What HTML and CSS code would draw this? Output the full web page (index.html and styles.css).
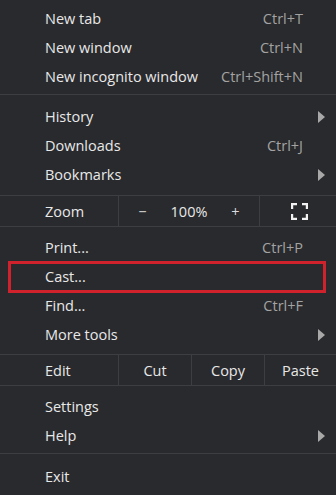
FILE: index.html
```html
<!DOCTYPE html>
<html lang="en">
<head>
    <meta charset="UTF-8">
    <meta name="viewport" content="width=device-width, initial-scale=1.0">
    <title>Menu</title>
    <link rel="stylesheet" href="styles.css">
</head>
<body>

    <div class="menu">
        <div class="item"><span class="label">New tab</span><span class="key">Ctrl+T</span></div>
        <div class="item"><span class="label">New window</span><span class="key">Ctrl+N</span></div>
        <div class="item"><span class="label">New incognito window</span><span class="key">Ctrl+Shift+N</span></div>

        <div class="sep"></div>

        <div class="item"><span class="label">History</span><span class="arrow"></span></div>
        <div class="item"><span class="label">Downloads</span><span class="key">Ctrl+J</span></div>
        <div class="item"><span class="label">Bookmarks</span><span class="arrow"></span></div>

        <!-- zoom controls -->
        <div class="split zoom-row">
            <div class="cell-label">Zoom</div>
            <div class="zoom-ctrl">
                <span class="minus">&minus;</span>
                <span>100%</span>
                <span class="plus">+</span>
            </div>
            <div class="full">
                <svg width="17" height="17" viewBox="0 0 17 17" fill="none" stroke="#f2f2f2" stroke-width="2.2">
                    <path d="M1.1 6V1.1H6M11 1.1h4.9V6M15.9 11v4.9H11M6 15.9H1.1V11"/>
                </svg>
            </div>
        </div>

        <div class="item"><span class="label">Print...</span><span class="key">Ctrl+P</span></div>
        <div class="item marked"><span class="label">Cast...</span></div>
        <div class="item"><span class="label">Find...</span><span class="key">Ctrl+F</span></div>
        <div class="item"><span class="label">More tools</span><span class="arrow"></span></div>

        <!-- edit controls -->
        <div class="split edit-row">
            <div class="cell-label">Edit</div>
            <div class="btn">Cut</div>
            <div class="btn">Copy</div>
            <div class="btn">Paste</div>
        </div>

        <div class="item"><span class="label">Settings</span></div>
        <div class="item"><span class="label">Help</span><span class="arrow"></span></div>

        <div class="sep last"></div>

        <div class="item"><span class="label">Exit</span></div>
    </div>

</body>
</html>
```

FILE: styles.css
```css
body {
    margin: 0;
    padding: 0;
    background-color: #292a2d;
    font-family: "Open Sans", "Noto Sans", Arial, sans-serif;
    font-size: 14.5px;
    color: #e8e8e8;
}
.menu {
    padding-top: 4px;
    width: 336px;
    height: 495px;
    overflow: hidden;
}
.item {
    position: relative;
    display: flex;
    align-items: center;
    height: 29px;
    padding-left: 45px;
    padding-right: 33px;
}
.label {
    flex: 1;
}
.key {
    color: #a3a3a3;
}
.arrow {
    position: absolute;
    right: 11px;
    top: 9px;
    width: 0;
    height: 0;
    border-top: 6px solid transparent;
    border-bottom: 6px solid transparent;
    border-left: 7px solid #a8a8a8;
}
.sep {
    height: 1px;
    background-color: #3d3e41;
    margin: 3px 0 7px;
}
.sep.last {
    margin-bottom: 8px;
}
.split {
    display: flex;
    height: 30px;
    border-top: 1px solid #3d3e41;
    border-bottom: 1px solid #3d3e41;
}
.zoom-row {
    margin-top: 6px;
    margin-bottom: 6px;
}
.edit-row {
    margin-top: 5px;
    margin-bottom: 6px;
}
.cell-label {
    width: 118px;
    padding-left: 45px;
    box-sizing: border-box;
    display: flex;
    align-items: center;
}
.zoom-ctrl {
    width: 140px;
    display: grid;
    grid-template-columns: 47px 46px 47px;
    align-items: center;
    justify-items: center;
    border-left: 1px solid #3d3e41;
}
.minus, .plus {
    color: #dcdcdc;
}
.full {
    flex: 1;
    display: flex;
    align-items: center;
    justify-content: center;
    padding-left: 2px;
    border-left: 1px solid #3d3e41;
}
.btn {
    width: 72px;
    display: flex;
    align-items: center;
    justify-content: center;
    border-left: 1px solid #3d3e41;
}
.btn:last-child {
    flex: 1;
}
/* red highlight drawn round the Cast row */
.marked::after {
    content: "";
    position: absolute;
    left: 8px;
    right: 10px;
    top: -1px;
    bottom: -2px;
    border: 3px solid #d0222c;
}
```
